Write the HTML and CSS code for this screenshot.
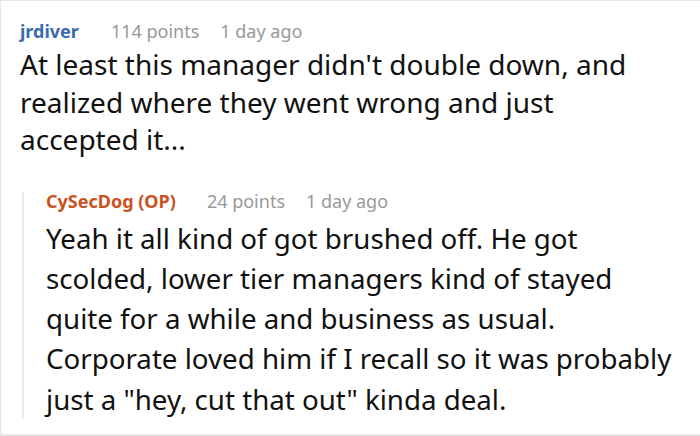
FILE: index.html
```html
<!DOCTYPE html>
<html>
<head>
<meta charset="utf-8">
<link rel="stylesheet" href="styles.css">
</head>
<body>
<div class="frame">
  <div class="comment">
    <div class="meta">
      <span class="author">jrdiver</span>
      <span class="info">114 points</span>
      <span class="info">1 day ago</span>
    </div>
    <p class="text">At least this manager didn't double down, and realized where they went wrong and just accepted it...</p>
    <div class="reply">
      <div class="meta meta-reply">
        <span class="author op">CySecDog (OP)</span>
        <span class="info">24 points</span>
        <span class="info">1 day ago</span>
      </div>
      <p class="text text-reply">Yeah it all kind of got brushed off. He got scolded, lower tier managers kind of stayed quite for a while and business as usual. Corporate loved him if I recall so it was probably just a "hey, cut that out" kinda deal.</p>
    </div>
  </div>
</div>
</body>
</html>
```

FILE: styles.css
```css
* { box-sizing: border-box; }
html, body { margin: 0; padding: 0; background: #fff; }
body { font-family: "Noto Sans", sans-serif; color: #111; }
.frame {
  width: 700px;
  height: 436px;
  border-top: 1px solid #e6e6e6;
  border-left: 1px solid #e6e6e6;
  border-bottom: 2px solid #e6e6e6;
  padding: 17px 0 0 19px;
  overflow: hidden;
}
.meta { display: flex; align-items: baseline; font-size: 18px; line-height: 26px; }
.author { font-weight: bold; color: #3b6aae; margin-right: 32px; }
.author.op { color: #c9531f; margin-right: 31px; }
.info { color: #999; margin-right: 21px; }
.text { margin: 2px 0 0; font-size: 28px; line-height: 37.5px; width: 640px; }
.reply {
  margin-top: 33px;
  margin-left: 2px;
  border-left: 2px solid #ebebeb;
  padding-left: 22px;
}
.meta-reply { line-height: 18px; }
.text-reply { font-size: 27.7px; line-height: 40.3px; margin-top: 8px; width: 636px; }
```
